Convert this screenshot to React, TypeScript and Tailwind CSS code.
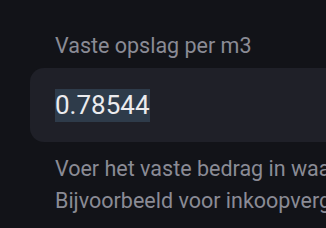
const FONT = { fontFamily: 'Roboto, "Noto Sans", sans-serif' };

const App = () => {
  return (
    <div
      className="w-[326px] h-[228px] overflow-hidden bg-[#121318] pl-[30px] pt-[30px]"
      style={FONT}
    >
      <div className="w-[340px]">
        <label className="block pl-[25px] text-[21.5px] leading-[32px] text-[#8a8b95] whitespace-nowrap">
          Vaste opslag per m3
        </label>
        <div className="mt-[6px] h-[74px] rounded-[14px] bg-[#1f2028] pl-[25px] flex items-center">
          <span className="text-[26px] leading-[33px] text-[#ebebee] bg-[#2e3b4a]">0.78544</span>
        </div>
        <div className="mt-[11px] pl-[25px] text-[21.5px] leading-[32px] text-[#8a8b95] whitespace-nowrap">
          <p>Voer het vaste bedrag in waarmee de prijs per m3 wordt verhoogd.</p>
          <p>Bijvoorbeeld voor inkoopvergoeding of transportkosten.</p>
        </div>
      </div>
    </div>
  );
};

export default App;
